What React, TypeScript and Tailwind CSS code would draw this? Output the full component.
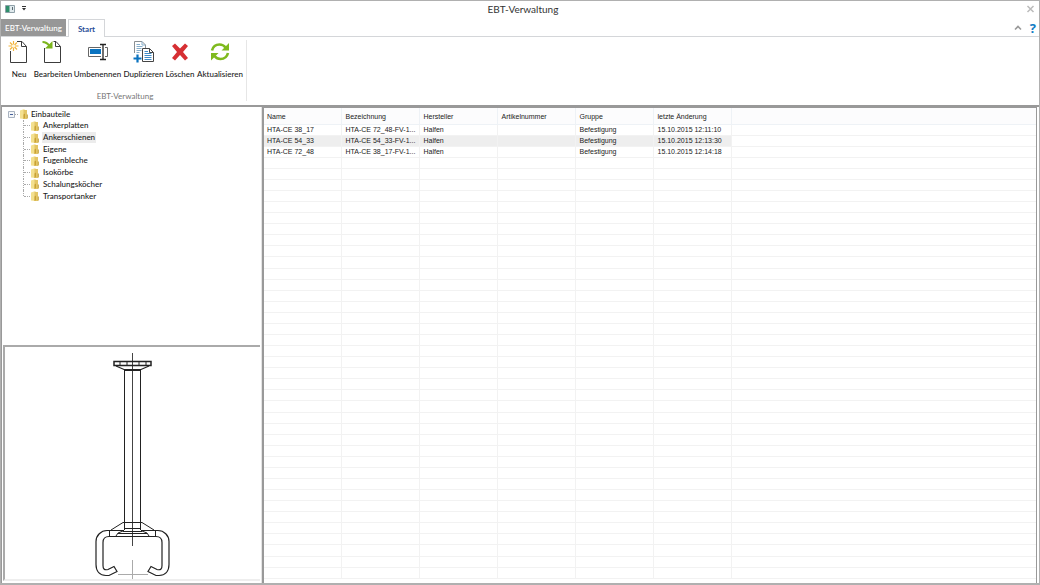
import type { ReactNode } from "react"

const folders = [
  "Ankerplatten",
  "Ankerschienen",
  "Eigene",
  "Fugenbleche",
  "Isokörbe",
  "Schalungsköcher",
  "Transportanker",
]

const columns = ["Name", "Bezeichnung", "Hersteller", "Artikelnummer", "Gruppe", "letzte Änderung"]

const rows = [
  ["HTA-CE 38_17", "HTA-CE 72_48-FV-1...", "Halfen", "", "Befestigung", "15.10.2015 12:11:10"],
  ["HTA-CE 54_33", "HTA-CE 54_33-FV-1...", "Halfen", "", "Befestigung", "15.10.2015 12:13:30"],
  ["HTA-CE 72_48", "HTA-CE 38_17-FV-1...", "Halfen", "", "Befestigung", "15.10.2015 12:14:18"],
]

const EMPTY_ROWS = 38

const NewIcon = () => (
  <svg width="22" height="24" viewBox="0 0 22 24" fill="none">
    <path d="M2.500 11v11.500h16V6.500L14 1.500H9" stroke="#3c3c3c" />
    <path d="M13.500 1.500v5h5" stroke="#3c3c3c" />
    <path d="M5.500 1v10M.5 6h10M2 2.500l7 7M9 2.500l-7 7" stroke="#f3b43c" strokeWidth="1.200" />
    <circle cx="5.500" cy="6" r="1.700" fill="#fff6dc" />
  </svg>
)

const EditIcon = () => (
  <svg width="22" height="24" viewBox="0 0 22 24" fill="none">
    <path d="M2.500 8v14.500h16V6.500L14 1.500h-2.500" stroke="#3c3c3c" />
    <path d="M13.500 1.500v5h5" stroke="#3c3c3c" />
    <path d="M.5 2c3 0 5 1 7 4" stroke="#7cb51c" strokeWidth="2" />
    <path d="M10.500 1v7.500H3z" fill="#7cb51c" />
  </svg>
)

const RenameIcon = () => (
  <svg width="22" height="24" viewBox="0 0 22 24" fill="none">
    <path d="M14 7.500H1.500v9H14M18 7.500h2.500v9H18" stroke="#666" />
    <rect x="3" y="9" width="11" height="5" fill="#0a73c0" />
    <path d="M13 4.500h2.500l.5 1 .5-1H19M16 5v14M13 19.500h2.500l.5-1 .5 1H19" stroke="#222" strokeWidth="1.300" />
  </svg>
)

const DuplicateIcon = () => (
  <svg width="22" height="24" viewBox="0 0 22 24" fill="none">
    <path d="M1.500 13V1.500h7.500l3.500 3.500v3" stroke="#8a8f93" />
    <path d="M9 1.500V5h3.500M3.500 4.500H7M3.500 6.500h6M3.500 8.500h5M3.500 10.500h5M3.500 12.500h3" stroke="#86aecb" />
    <path d="M9.500 8.500h7l4 4v9h-11z" fill="#fff" stroke="#444" />
    <path d="M16.500 8.500v4h4" stroke="#444" />
    <path d="M11.500 11.500H15M11.500 13.500h7M11.500 15.500h7M11.500 17.500h7M11.500 19.500h7" stroke="#3f8cc8" />
    <path d="M4.500 14.500v8M.5 18.500h8" stroke="#0a73c0" strokeWidth="2.200" />
  </svg>
)

const DeleteIcon = () => (
  <svg width="22" height="24" viewBox="0 0 22 24">
    <path
      d="M6 3.500l5 5 5-5 3 2.500-5 6 5 6-3 2.500-5-5.500-5 5.500L3 18l5-6L3 6z"
      fill="#d62f33"
    />
  </svg>
)

const RefreshIcon = () => (
  <svg width="22" height="24" viewBox="0 0 22 24" fill="none">
    <path d="M3 10.500C4 6.500 7 4.500 10.500 4.500c2.500 0 4.500 1 6 3M19 13c-1 4-4 6-7.500 6-2.500 0-4.500-1-6-3" stroke="#7fba1e" strokeWidth="2.600" />
    <path d="M20 3v7.500h-7.500zM2 20.500V13h7.500z" fill="#7fba1e" />
  </svg>
)

const FolderIcon = () => (
  <svg width="10" height="10" viewBox="0 0 10 10" className="shrink-0">
    <path d="M1 1.500L5.500 0v10L1 9.500z" fill="#f3e08f" />
    <path d="M4.500 1H8v9H4.500z" fill="#e3c565" />
    <path d="M4.500 5.500L6 4.500V9l-1.500 1z" fill="#c9a236" />
    <path d="M7.500 5.500H9v4H7.500z" fill="#cdb25c" />
  </svg>
)

// cast-in channel with anchor bolt
const ChannelDrawing = () => (
  <svg width="92" height="232" viewBox="0 0 92 232" fill="none" stroke="#222" strokeWidth="1" className="max-h-full shrink-0">
    <path d="M45.500 6v193" stroke="#444" />
    <path d="M27 14.500h37v4H27z" strokeWidth="1.500" />
    <path d="M33 14v5M40 14v5M52 14v5M59 14v5" />
    <path d="M29 19l8 3.500h17l8-3.500M37 23.500h17" strokeWidth="1.200" />
    <path d="M37.500 24v152M53.500 24v152" />
    <path d="M36 175.500h19l12 7.500M36 175.500L24 183M37.500 176v7M53.500 176v7" />
    <path d="M37 181.500h17M36 184.500h19M31 186.500h29M29 189.500h33M36 184l-5 2-2 3M55 184l5 2 2 3" />
    <path d="M22.500 183.500v6M68.500 183.500v6" />
    <path
      d="M24 183.500h-4c-6 0-11 5-11 11v23c0 7 4 11 10 11h3l8-4-3-5-6 3c-4 1-5-1-5-4v-23c0-4 2-6 6-6h47c4 0 6 2 6 6v23c0 3-1 5-5 4l-6-3-3 5 8 4h3c6 0 10-4 10-11v-23c0-6-5-11-11-11h-4"
      strokeWidth="1.200"
    />
    <path d="M24 183.500h13M54 183.500h13" />
    <path d="M45.500 213v19M31 227.500h30" stroke="#aaa" />
  </svg>
)

const RibbonButton = ({ label, className, children }: { label: string; className: string; children: ReactNode }) => (
  <button className={`flex shrink-0 flex-col items-center whitespace-nowrap ${className}`}>
    {children}
    <span className="mt-[5px] leading-[10px]">{label}</span>
  </button>
)

const TitleBar = () => (
  <header className="flex h-[18px] shrink-0 items-center justify-between px-1 pb-[3px]">
    <div className="flex w-10 items-center gap-2">
      <svg width="11" height="10" viewBox="0 0 11 10">
        <path d="M.5 1.500h9v7h-9z" fill="#dfe9ec" stroke="#8fa0a8" />
        <path d="M1 2h3.500v6H1z" fill="#2f8f6b" />
        <path d="M7.500 3v3" stroke="#5a6a72" />
      </svg>
      <button aria-label="Schnellzugriff anpassen" className="-ml-1">
        <svg width="7" height="7" viewBox="0 0 7 7">
          <path d="M2 1h4v1H2zM2 3h4L4 5.500z" fill="#333" />
        </svg>
      </button>
    </div>
    <h1 className="pl-[6px] text-[10px] leading-3 text-[#333]">EBT-Verwaltung</h1>
    <div className="flex w-10 justify-end">
      <button aria-label="Schließen">
        <svg width="9" height="9" viewBox="0 0 9 9">
          <path d="M1.500 2l6 6M7.500 2l-6 6" stroke="#bbb" strokeWidth="1.500" />
        </svg>
      </button>
    </div>
  </header>
)

const Tabs = () => (
  <nav className="flex h-[18px] shrink-0 border-b border-[#d4d6d9]">
    <button className="w-[65px] bg-[#979797] font-medium text-white">EBT-Verwaltung</button>
    <button className="-mb-px ml-[2px] w-[37px] border border-b-0 border-[#d4d6d9] bg-white font-bold text-[#2b4f97]">
      Start
    </button>
    <div className="ml-auto flex items-center gap-2 pr-[3px]">
      <button aria-label="Menüband minimieren">
        <svg width="8" height="6" viewBox="0 0 8 6" fill="none">
          <path d="M1 4.500l3-3 3 3" stroke="#999" strokeWidth="1.600" />
        </svg>
      </button>
      <button aria-label="Hilfe" className="font-['Open_Sans',sans-serif] text-[13px] font-bold leading-3 text-[#0f7cc4]">?</button>
    </div>
  </nav>
)

const Ribbon = () => (
  <section className="flex h-[68px] shrink-0 pl-[3px] pt-[3px]">
    <div className="flex h-[61px] flex-col justify-between border-r border-[#e6e6e6] pr-[2px] font-medium text-[#222]">
      <div className="flex">
        <RibbonButton label="Neu" className="w-[30px]"><NewIcon /></RibbonButton>
        <RibbonButton label="Bearbeiten" className="w-[38px]"><EditIcon /></RibbonButton>
        <RibbonButton label="Umbenennen" className="w-[51px]"><RenameIcon /></RibbonButton>
        <RibbonButton label="Duplizieren" className="w-[41px]"><DuplicateIcon /></RibbonButton>
        <RibbonButton label="Löschen" className="w-[32px]"><DeleteIcon /></RibbonButton>
        <RibbonButton label="Aktualisieren" className="w-[48px]"><RefreshIcon /></RibbonButton>
      </div>
      <p className="pl-[2px] text-center font-normal leading-[10px] text-[#777]">EBT-Verwaltung</p>
    </div>
  </section>
)

const FolderTree = () => (
  <div className="min-h-0 flex-1 pl-[6px] pt-px font-medium text-[#222]">
    <button className="flex h-3 items-center">
      <svg width="11" height="9" viewBox="0 0 11 9" fill="none">
        <path d="M.5 1.500h6v6h-6z" fill="#f4f6f9" stroke="#a9b3c0" />
        <path d="M2 4.500h3" stroke="#44609a" />
        <path d="M7 4.500h4" stroke="#aaa" strokeDasharray="1 1" />
      </svg>
      <FolderIcon />
      <span className="ml-px px-px leading-[10px]">Einbauteile</span>
    </button>
    <ul className="ml-[15px] grid h-[82px] grid-rows-7">
      {folders.map((name, idx) => (
        <li key={name} className="flex items-center">
          <span
            className={`w-px border-l border-dotted border-[#aaa] ${
              idx === folders.length - 1 ? "h-1/2 self-start" : "h-full"
            }`}
          />
          <span className="w-[6px] border-t border-dotted border-[#aaa]" />
          <button className="flex items-center">
            <FolderIcon />
            <span className={`ml-[2px] px-px leading-[11px] ${name === "Ankerschienen" ? "bg-[#ececec]" : ""}`}>
              {name}
            </span>
          </button>
        </li>
      ))}
    </ul>
  </div>
)

const PartsTable = () => (
  <div className="min-w-0 flex-1 overflow-hidden border-l-2 border-r border-t border-[#999] pb-1 font-['Liberation_Sans',sans-serif] text-[7px] text-[#222]">
    <table className="h-full w-full table-fixed border-collapse text-left leading-[10px]">
      <thead>
        <tr className="h-4 border-b border-[#eef2f6] bg-[#fcfcfd]">
          {columns.map((col) => (
            <th
              key={col}
              scope="col"
              className="w-[78px] border-r border-[#eef2f6] p-0 pl-1 pt-[2px] font-normal first:w-[77px] first:pl-[3px]"
            >
              {col}
            </th>
          ))}
          <td />
        </tr>
      </thead>
      <tbody>
        {rows.map((row, idx) => (
          <tr key={row[0]} className="h-[11px] border-b border-[#f2f2f2]">
            {row.map((cell, cellIdx) => (
              <td
                key={cellIdx}
                className={`whitespace-nowrap border-r border-[#f2f2f2] p-0 pl-1 first:pl-[3px] ${
                  idx === 1 ? "bg-[#eeeeee]" : ""
                }`}
              >
                {cell}
              </td>
            ))}
            <td />
          </tr>
        ))}
        {Array.from({ length: EMPTY_ROWS }, (_, idx) => (
          <tr key={idx} className="h-[11px] border-b border-[#f2f2f2]">
            {columns.map((col) => (
              <td key={col} className="border-r border-[#f2f2f2] p-0" />
            ))}
            <td />
          </tr>
        ))}
      </tbody>
    </table>
  </div>
)

const App = () => {
  return (
    <div className="flex h-screen flex-col overflow-hidden border border-b-2 border-[#b0b0b0] bg-white font-['Lato','Open_Sans',sans-serif] text-[8px]">
      <TitleBar />
      <Tabs />
      <Ribbon />
      <main className="flex min-h-0 flex-1 border-l border-t-2 border-[#999] pr-[2px]">
        <aside className="flex w-[260px] shrink-0 flex-col border-r border-[#e4e4e4]">
          <FolderTree />
          <div className="mx-px mb-[2px] flex h-[236px] shrink-0 justify-center border-b-2 border-l-2 border-t-2 border-[#aaa] border-b-[#eee]">
            <ChannelDrawing />
          </div>
        </aside>
        <PartsTable />
      </main>
    </div>
  )
}

export default App
